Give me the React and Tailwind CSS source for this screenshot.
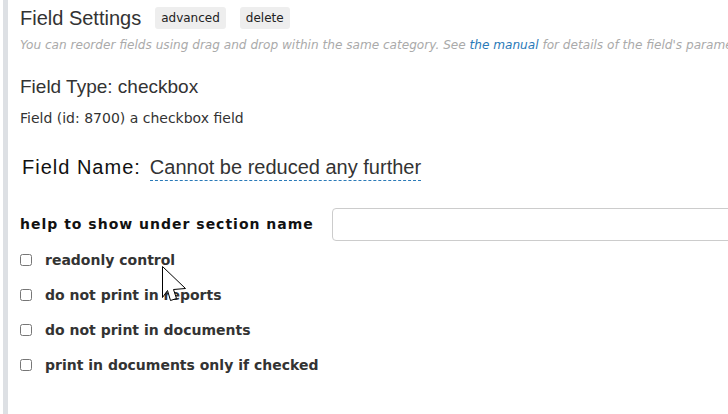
import React from "react";

const verdana = { fontFamily: '"DejaVu Sans", Verdana, sans-serif' };
const arial = { fontFamily: '"Liberation Sans", Arial, sans-serif' };

const options = [
  "readonly control",
  "do not print in reports",
  "do not print in documents",
  "print in documents only if checked",
];

function Pointer() {
  return (
    <svg
      className="absolute left-[161px] top-[265px]"
      width="27"
      height="38"
      viewBox="0 0 27 38"
    >
      <path
        d="M1.5 1.5 L1.5 32.5 L6.5 25.5 L9.5 35.5 L15.5 33.5 L12.5 24.5 L24.5 23.5 Z"
        fill="white"
        stroke="black"
        strokeWidth="1"
      />
    </svg>
  );
}

export default function App() {
  return (
    <div className="relative w-[728px] h-[414px] overflow-hidden bg-white pl-[3px]">
      <div className="h-full border-l-[5px] border-[#dde0e4] pl-[12px] pt-[6px]">
        <div className="flex items-center gap-[14px]">
          <h2 className="text-[20px] leading-[24px] text-[#333]" style={arial}>
            Field Settings
          </h2>
          <button className="h-[22px] px-[6px] rounded-[3px] bg-[#eeeeee] text-[12px] text-[#222]" style={verdana}>
            advanced
          </button>
          <button className="h-[22px] px-[6px] rounded-[3px] bg-[#eeeeee] text-[12px] text-[#222]" style={verdana}>
            delete
          </button>
        </div>
        <p className="mt-[8px] whitespace-nowrap text-[12.1px] leading-[14px] italic text-[#aaaaaa]" style={verdana}>
          You can reorder fields using drag and drop within the same category. See{" "}
          <a className="text-[#2a7ab8]">the manual</a> for details of the field's parameters.
        </p>
        <h3 className="mt-[24px] text-[19px] leading-[22px] text-[#333]" style={arial}>
          Field Type: checkbox
        </h3>
        <p className="mt-[12px] text-[14px] leading-[16px] text-[#333]" style={verdana}>
          Field (id: 8700) a checkbox field
        </p>
        <div className="mt-[28px] ml-[2px] flex items-baseline gap-[9px] text-[20px] leading-[26px]" style={arial}>
          <span className="text-[#111] tracking-[1px]">Field Name:</span>
          <span className="text-[#333] border-b border-dashed border-[#2a7ab8]">
            Cannot be reduced any further
          </span>
        </div>
        <div className="mt-[27px] flex items-center">
          <label className="w-[312px] shrink-0 text-[14px] font-bold tracking-[1px] text-[#111]" style={verdana}>
            help to show under section name
          </label>
          <input className="h-[33px] flex-1 min-w-[400px] rounded-[4px] border border-[#cccccc]" />
        </div>
        <div className="mt-[11px] flex flex-col gap-[19px]">
          {options.map((o) => (
            <label key={o} className="flex items-center gap-[13px] h-[16px] text-[14px] font-bold text-[#333]" style={verdana}>
              <input type="checkbox" className="w-[12px] h-[12px] m-0" />
              {o}
            </label>
          ))}
        </div>
      </div>
      <Pointer />
    </div>
  );
}
